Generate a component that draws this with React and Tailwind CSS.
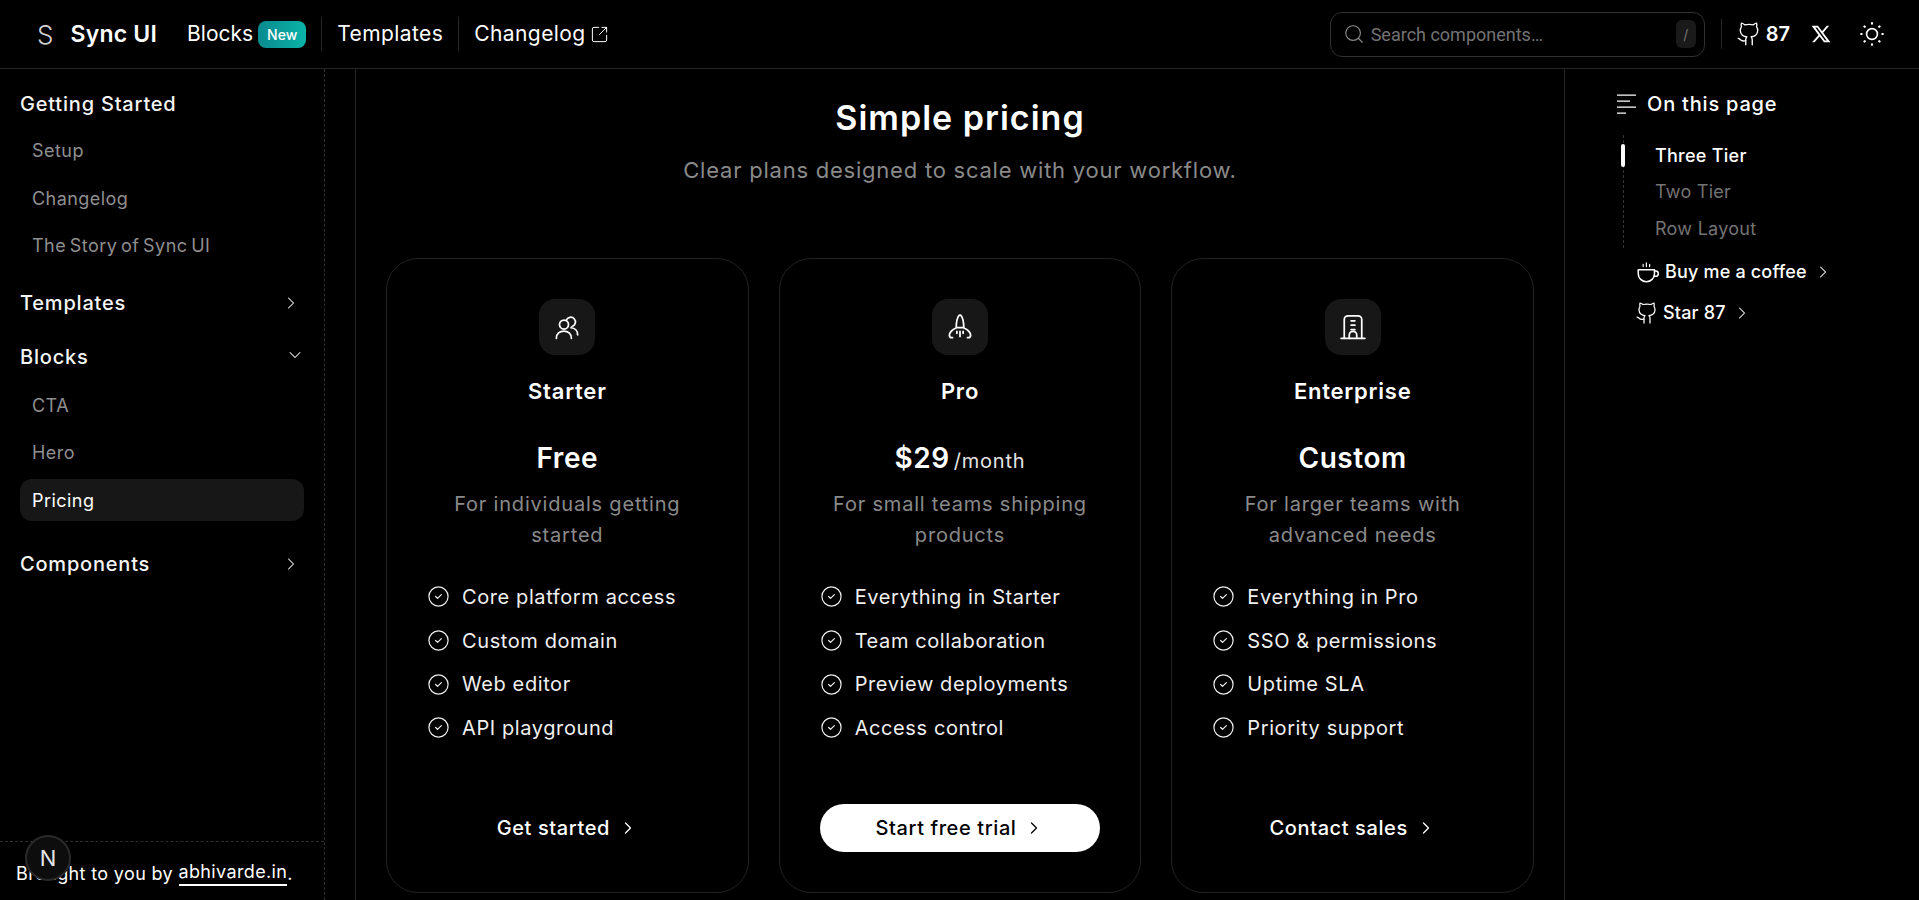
import { ChevronRight, ChevronDown, CircleCheck, Search, SquareArrowOutUpRight, Github } from 'lucide-react';
import { RiTwitterXLine } from 'react-icons/ri';

const PLANS = [
  {
    name: 'Starter',
    price: 'Free',
    desc: 'For individuals getting started',
    features: ['Core platform access', 'Custom domain', 'Web editor', 'API playground'],
    cta: 'Get started',
    icon: 'users',
  },
  {
    name: 'Pro',
    price: '$29',
    unit: '/month',
    desc: 'For small teams shipping products',
    features: ['Everything in Starter', 'Team collaboration', 'Preview deployments', 'Access control'],
    cta: 'Start free trial',
    primary: true,
    icon: 'rocket',
  },
  {
    name: 'Enterprise',
    price: 'Custom',
    desc: 'For larger teams with advanced needs',
    features: ['Everything in Pro', 'SSO & permissions', 'Uptime SLA', 'Priority support'],
    cta: 'Contact sales',
    icon: 'building',
  },
];

function PlanIcon({ type }) {
  const props = { width: 30, height: 30, viewBox: '0 0 24 24', fill: 'none', stroke: 'currentColor', strokeWidth: 1.4, strokeLinecap: 'round', strokeLinejoin: 'round' };
  if (type === 'users') {
    return (
      <svg {...props}>
        <circle cx="9.6" cy="10" r="3.6" />
        <path d="M3.5 21c0-3.6 2.7-5.8 6-5.8s6 2.2 6 5.8" />
        <path d="M11.4 6.6a3.8 3.8 0 1 1 4.6 5" />
        <path d="M15.2 12.6c3 .2 5.3 2.4 5.3 5.6" />
      </svg>
    );
  }
  if (type === 'rocket') {
    return (
      <svg {...props}>
        <path d="M9 12.500c0-2.500.6-7.500 2-9.500.5-.8 1.500-.8 2 0 1.400 2 2 7 2 9.500z" />
        <path d="M8.500 13c-2.500.7-5 3.500-5 5.500 0 1.200.8 2 2 2h.5" />
        <path d="M15.500 13c2.500.7 5 3.500 5 5.500 0 1.200-.8 2-2 2H18" />
        <path d="M12 15.500v4M9.500 15.500v1.500M14.500 15.500v1.500" />
      </svg>
    );
  }
  return (
    <svg {...props}>
      <path d="M5 21V6a3 3 0 0 1 3-3h8a3 3 0 0 1 3 3v15" />
      <path d="M2.500 21h19" />
      <path d="M10.500 7h3M10.500 10.500h3M10.500 14h3" />
      <path d="M9 21v-2.500a3 3 0 0 1 6 0V21" />
    </svg>
  );
}

function SunIcon() {
  return (
    <svg width="26" height="26" viewBox="0 0 24 24" fill="none" stroke="currentColor" strokeWidth="1.5" strokeLinecap="round">
      <circle cx="12" cy="12" r="5" />
      <path d="M12 2v.5M12 21.500v.5M2 12h.5M21.500 12h.5M5 5l.4.4M18.600 18.600l.4.4M5 19l.4-.4M18.600 5.400 19 5" strokeWidth="2" />
    </svg>
  );
}

function CoffeeIcon() {
  return (
    <svg width="26" height="26" viewBox="0 0 24 24" fill="none" stroke="currentColor" strokeWidth="1.400" strokeLinecap="round" strokeLinejoin="round">
      <path d="M3 10h15v3.500a7.500 7.500 0 0 1-15 0z" />
      <path d="M18 11h1a2.500 2.500 0 0 1 0 5h-1.500" />
      <path d="M7.500 7V5M10.500 7V3.500M13.500 7V5" strokeWidth="1.100" />
    </svg>
  );
}

function SideHeading({ label, open, chevron }) {
  return (
    <div className="flex h-7 items-center justify-between pr-[3px] text-[20px] leading-7 font-medium tracking-[0.04em] text-[#f5f5f5]">
      <span>{label}</span>
      {chevron && (open ? <ChevronDown size={20} strokeWidth={1.25} className="mr-[-4px] mb-1" /> : <ChevronRight size={20} strokeWidth={1.25} />)}
    </div>
  );
}

function SideItem({ label, active }) {
  if (active) {
    return (
      <div className="my-[2.500px] flex h-[42px] items-center rounded-xl bg-[#171717] pl-3 text-[18px] tracking-[0.025em] text-white">
        {label}
      </div>
    );
  }
  return (
    <div className="flex h-[47.500px] items-center pl-3 text-[18px] tracking-[0.025em] [word-spacing:-0.1em] text-[#8f8f8f]">
      {label}
    </div>
  );
}

function PlanCard({ plan }) {
  return (
    <div className="flex h-[635px] flex-col items-center rounded-[32px] border border-[#222222] px-10 pt-10 pb-10">
      <div className="flex size-14 items-center justify-center rounded-2xl bg-[#171717] text-white">
        <PlanIcon type={plan.icon} />
      </div>
      <div className="mt-[22px] text-[22px] leading-7 font-semibold tracking-[0.035em] text-white">{plan.name}</div>
      <div className="mt-[35px] flex h-9 items-baseline gap-1 text-white">
        <span className="text-[28px] leading-9 font-semibold tracking-[0.02em]">{plan.price}</span>
        {plan.unit && <span className="text-[20px] tracking-[0.04em] text-[#e5e5e5]">{plan.unit}</span>}
      </div>
      <p className="mt-[13px] w-[260px] text-center text-[20px] leading-[31px] tracking-[0.04em] text-[#8a8a8a]">{plan.desc}</p>
      <ul className="mt-6 w-full">
        {plan.features.map((feature) => (
          <li key={feature} className="flex h-[43.700px] items-center gap-3 text-[20px] tracking-[0.03em] text-[#f0f0f0]">
            <CircleCheck size={23} strokeWidth={1.25} className="shrink-0" />
            {feature}
          </li>
        ))}
      </ul>
      <button
        className={`mt-auto flex h-12 w-full items-center justify-center gap-2 rounded-full text-[20px] font-medium tracking-[0.03em] ${
          plan.primary ? 'bg-white text-black' : 'text-white'
        }`}
      >
        {plan.cta}
        <ChevronRight size={20} strokeWidth={1.5} />
      </button>
    </div>
  );
}

export default function App() {
  return (
    <div className="relative flex h-screen flex-col overflow-hidden bg-black text-white font-['Inter',sans-serif]">
      {/* Header */}
      <header className="flex h-[69px] shrink-0 items-center border-b border-[#262626] pr-[34px] pl-[37px]">
        <span className="text-[26px] font-light text-[#d4d4d4]">S</span>
        <span className="ml-[17px] text-[23px] font-semibold tracking-[0.01em]">Sync UI</span>
        <span className="ml-[30px] text-[21px]">Blocks</span>
        <span className="ml-[5px] flex h-[27px] w-[48px] items-center justify-center rounded-lg bg-gradient-to-r from-[#0a8a8f] to-[#0bb3a8] text-[14px] font-medium">New</span>
        <span className="mx-[15px] h-[34px] w-px bg-[#262626]" />
        <span className="text-[21px] tracking-[0.02em]">Templates</span>
        <span className="mx-[15px] h-[34px] w-px bg-[#262626]" />
        <span className="text-[21px] tracking-[0.02em]">Changelog</span>
        <SquareArrowOutUpRight size={19} strokeWidth={1.25} className="ml-1" />

        <div className="ml-auto flex h-[45px] w-[375px] items-center rounded-xl border border-[#303030] pr-2 pl-3">
          <Search size={22} strokeWidth={1.25} className="text-[#8a8a8a]" />
          <span className="ml-[6px] font-['Roboto',sans-serif] text-[18px] text-[#737373]">Search components…</span>
          <span className="ml-auto flex h-7 w-5 items-center justify-center rounded-md bg-[#1a1a1a] text-[14px] text-[#737373]">/</span>
        </div>
        <span className="mr-[14px] ml-4 h-[30px] w-px bg-[#262626]" />
        <Github size={26} strokeWidth={1.25} />
        <span className="ml-1 text-[20px] font-semibold">87</span>
        <RiTwitterXLine size={22} className="ml-5" />
        <span className="ml-[27px]"><SunIcon /></span>
      </header>

      <div className="flex min-h-0 flex-1">
        {/* Sidebar */}
        <aside className="flex w-[325px] shrink-0 flex-col justify-between border-r border-dashed border-[#2e2e2e]">
          <nav className="px-5 pt-[21px]">
            <SideHeading label="Getting Started" />
            <div className="mt-[9px]">
              <SideItem label="Setup" />
              <SideItem label="Changelog" />
              <SideItem label="The Story of Sync UI" />
            </div>
            <div className="mt-[19px]"><SideHeading label="Templates" chevron /></div>
            <div className="mt-[26px]"><SideHeading label="Blocks" open chevron /></div>
            <div className="mt-[11px]">
              <SideItem label="CTA" />
              <SideItem label="Hero" />
              <SideItem label="Pricing" active />
            </div>
            <div className="mt-[29px]"><SideHeading label="Components" chevron /></div>
          </nav>
          <div className="flex h-[59px] items-center border-t border-dashed border-[#2e2e2e] pt-1 pl-4 text-[18px] tracking-[0.02em] whitespace-nowrap">
            Brought to you by&nbsp;<span className="border-b-2 border-white leading-6">abhivarde.in</span>.
          </div>
        </aside>

        <div className="w-[30px] shrink-0" />

        {/* Main */}
        <main className="flex w-[1210px] shrink-0 flex-col border-x border-[#262626] px-[30px] pt-[31px]">
          <h2 className="text-center text-[34px] leading-9 font-semibold tracking-[0.03em]">Simple pricing</h2>
          <p className="mt-5 text-center text-[22px] leading-7 tracking-[0.035em] text-[#8a8a8a]">Clear plans designed to scale with your workflow.</p>
          <div className="mt-[74px] grid grid-cols-3 gap-[30px]">
            {PLANS.map((plan) => (
              <PlanCard key={plan.name} plan={plan} />
            ))}
          </div>
        </main>

        {/* On this page */}
        <aside className="flex-1 pt-[21px] pl-[52px]">
          <div className="flex h-7 items-center gap-[11px] text-[20px] font-medium tracking-[0.04em]">
            <svg width="19" height="22" viewBox="0 0 19 22" fill="none" stroke="currentColor" strokeWidth="1.250">
              <path d="M0 2h19M0 8h13M0 14h19M0 20h9" />
            </svg>
            On this page
          </div>
          <div className="relative mt-[17px] ml-[6px] flex h-[113px] flex-col justify-center border-l border-dashed border-[#333333] pl-[31px] text-[18px] tracking-[0.015em]">
            <span className="absolute top-[9px] left-[-3px] h-[23px] w-[4px] rounded-full bg-white" />
            <div className="flex h-[36.500px] items-center font-medium text-white">Three Tier</div>
            <div className="flex h-[36.500px] items-center text-[#737373]">Two Tier</div>
            <div className="flex h-[36.500px] items-center text-[#737373]">Row Layout</div>
          </div>
          <div className="mt-[3px] ml-[18px] flex h-[41px] items-center gap-[4px] text-[18px] font-medium tracking-[0.01em]">
            <CoffeeIcon />
            Buy me a coffee
            <ChevronRight size={20} strokeWidth={1.25} className="ml-[2px]" />
          </div>
          <div className="ml-[18px] flex h-[41px] items-center gap-[4px] text-[18px] font-medium tracking-[0.01em]">
            <Github size={24} strokeWidth={1.25} />
            Star 87
            <ChevronRight size={20} strokeWidth={1.25} className="ml-[2px]" />
          </div>
        </aside>
      </div>

      {/* Dev indicator */}
      <div className="absolute top-[835px] left-[25px] flex size-[46px] items-center justify-center rounded-full border-2 border-[#2a2a2a] bg-[#0d0d0d] text-[22px] font-normal text-[#e5e5e5]">
        N
      </div>
    </div>
  );
}
